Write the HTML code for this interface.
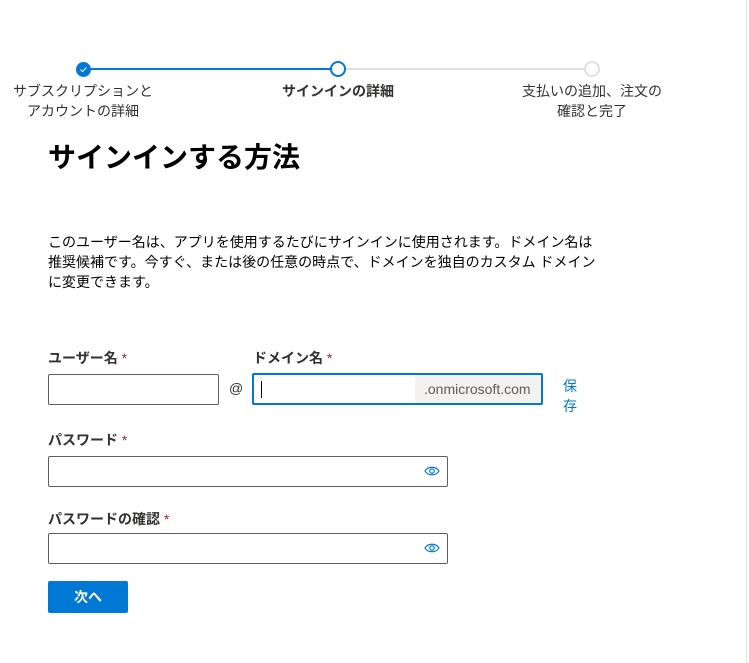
<!DOCTYPE html><html><head><meta charset="utf-8"><style>
body{margin:0;width:749px;height:663px;background:#fff;position:relative;overflow:hidden;font-family:"Liberation Sans","Noto Sans CJK JP",sans-serif;color:#323130}
.a{position:absolute}
.c{position:absolute;width:14px;height:14px;border-radius:50%;box-sizing:border-box}
.lab{position:absolute;font-size:14px;line-height:20px;text-align:center;width:200px}
.fl{position:absolute;font-size:14px;font-weight:bold;line-height:20px}
.fl span{color:#a4262c;font-weight:normal}
.in{position:absolute;border:1px solid #605e5c;border-radius:2px;box-sizing:border-box;height:31px}
</style></head><body>
<div class="a" style="right:2px;top:0;width:1px;height:663px;background:#e1dfdd"></div>
<div class="a" style="left:91px;top:68px;width:240px;height:2px;background:#0078d4"></div>
<div class="a" style="left:346px;top:68px;width:239px;height:2px;background:#e1dfdd"></div>
<div class="c" style="left:76px;top:62px;width:15px;height:15px;background:#0078d4"><svg width="15" height="15" style="position:absolute;left:0;top:0"><path d="M4.5 7.5l2 2 4-4" stroke="#fff" stroke-width="1" fill="none"/></svg></div>
<div class="c" style="left:330px;top:61px;width:16px;height:16px;border:2px solid #0078d4;background:#fff"></div>
<div class="c" style="left:584px;top:61px;width:16px;height:16px;border:2px solid #e1dfdd;background:#fff"></div>
<div class="lab" style="left:-17px;top:81px">サブスクリプションと<br>アカウントの詳細</div>
<div class="lab" style="left:238px;top:81px;font-weight:bold">サインインの詳細</div>
<div class="lab" style="left:492px;top:81px">支払いの追加、注文の<br>確認と完了</div>
<div class="a" style="left:48px;top:139px;font-size:28px;font-weight:bold;line-height:38px;color:#000">サインインする方法</div>
<div class="a" style="left:48px;top:232px;font-size:14px;line-height:20px;width:560px;color:#000">このユーザー名は、アプリを使用するたびにサインインに使用されます。ドメイン名は<br>推奨候補です。今すぐ、または後の任意の時点で、ドメインを独自のカスタム ドメイン<br>に変更できます。</div>
<div class="fl" style="left:48px;top:348px">ユーザー名 <span>*</span></div>
<div class="fl" style="left:253px;top:348px">ドメイン名 <span>*</span></div>
<div class="in" style="left:48px;top:374px;width:171px"></div>
<div class="a" style="left:229px;top:380px;font-size:14px">@</div>
<div class="in" style="left:252px;top:373px;width:291px;height:32px;border:2px solid #0078d4;overflow:hidden">
<div class="a" style="left:7px;top:6px;width:1px;height:17px;background:#000"></div>
<div class="a" style="left:161px;top:0;right:0;height:28px;background:#f3f2f1;color:#605e5c;font-size:14px;line-height:28px;padding-left:9px">.onmicrosoft.com</div></div>
<div class="a" style="left:563px;top:376px;font-size:14px;line-height:20px;color:#0078d4;width:15px">保<br>存</div>
<div class="fl" style="left:48px;top:430px">パスワード <span>*</span></div>
<div class="in" style="left:48px;top:456px;width:400px"></div>
<div class="fl" style="left:48px;top:509px">パスワードの確認 <span>*</span></div>
<div class="in" style="left:48px;top:533px;width:400px"></div>
<svg class="a" style="left:424px;top:465px" width="16" height="12"><path d="M1 6c3-5 11-5 14 0c-3 5-11 5-14 0z" stroke="#0078d4" fill="none" stroke-width="1.2"/><circle cx="8" cy="6" r="2.2" stroke="#0078d4" fill="none" stroke-width="1.2"/></svg>
<svg class="a" style="left:424px;top:542px" width="16" height="12"><path d="M1 6c3-5 11-5 14 0c-3 5-11 5-14 0z" stroke="#0078d4" fill="none" stroke-width="1.2"/><circle cx="8" cy="6" r="2.2" stroke="#0078d4" fill="none" stroke-width="1.2"/></svg>
<div class="a" style="left:48px;top:581px;width:80px;height:32px;background:#0078d4;border-radius:2px;color:#fff;font-weight:bold;font-size:14px;line-height:32px;text-align:center">次へ</div>
</body></html>
